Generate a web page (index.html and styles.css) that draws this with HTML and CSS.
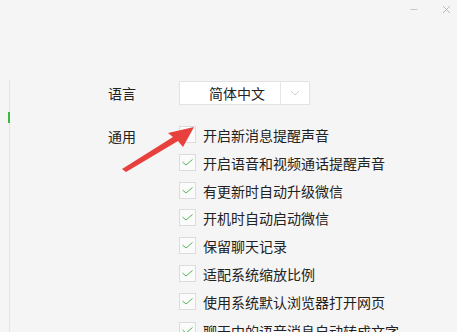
FILE: index.html
```html
<!DOCTYPE html>
<html lang="zh-CN">
<head>
<meta charset="utf-8">
<title>设置</title>
<link rel="stylesheet" href="styles.css">
</head>
<body>
<div class="page">
  <div class="titlebar">
    <span class="win-btn min"><svg width="8" height="8" viewBox="0 0 8 8"><path d="M0.5 4.5H7.5" stroke="#c8c8c8" stroke-width="1"/></svg></span>
    <span class="win-btn close"><svg width="9" height="9" viewBox="0 0 9 9"><path d="M1 1L8 8M8 1L1 8" stroke="#b8b8b8" stroke-width="1"/></svg></span>
  </div>
  <div class="main">
    <div class="rail"><div class="rail-mark"></div></div>
    <div class="content">
      <div class="row lang-row">
        <div class="label">语言</div>
        <div class="select">
          <div class="select-value">简体中文</div>
          <div class="select-arrow"><svg width="10" height="6" viewBox="0 0 10 6"><path d="M1 1L5 5L9 1" fill="none" stroke="#cfcfcf" stroke-width="1"/></svg></div>
        </div>
      </div>
      <div class="row general-row">
        <div class="label general-label">通用</div>
        <ul class="options">
          <li class="option"><span class="box"></span><span class="opt-text">开启新消息提醒声音</span></li>
          <li class="option"><span class="box checked"><svg width="11" height="7" viewBox="0 0 11 7"><path d="M0.5 3L4 6L10.5 0.5" fill="none" stroke="#4fb84f" stroke-width="1"/></svg></span><span class="opt-text">开启语音和视频通话提醒声音</span></li>
          <li class="option"><span class="box checked"><svg width="11" height="7" viewBox="0 0 11 7"><path d="M0.5 3L4 6L10.5 0.5" fill="none" stroke="#4fb84f" stroke-width="1"/></svg></span><span class="opt-text">有更新时自动升级微信</span></li>
          <li class="option"><span class="box checked"><svg width="11" height="7" viewBox="0 0 11 7"><path d="M0.5 3L4 6L10.5 0.5" fill="none" stroke="#4fb84f" stroke-width="1"/></svg></span><span class="opt-text">开机时自动启动微信</span></li>
          <li class="option"><span class="box checked"><svg width="11" height="7" viewBox="0 0 11 7"><path d="M0.5 3L4 6L10.5 0.5" fill="none" stroke="#4fb84f" stroke-width="1"/></svg></span><span class="opt-text">保留聊天记录</span></li>
          <li class="option"><span class="box checked"><svg width="11" height="7" viewBox="0 0 11 7"><path d="M0.5 3L4 6L10.5 0.5" fill="none" stroke="#4fb84f" stroke-width="1"/></svg></span><span class="opt-text">适配系统缩放比例</span></li>
          <li class="option"><span class="box checked"><svg width="11" height="7" viewBox="0 0 11 7"><path d="M0.5 3L4 6L10.5 0.5" fill="none" stroke="#4fb84f" stroke-width="1"/></svg></span><span class="opt-text">使用系统默认浏览器打开网页</span></li>
          <li class="option option-last"><span class="box checked"><svg width="11" height="7" viewBox="0 0 11 7"><path d="M0.5 3L4 6L10.5 0.5" fill="none" stroke="#4fb84f" stroke-width="1"/></svg></span><span class="opt-text">聊天中的语音消息自动转成文字</span></li>
        </ul>
      </div>
    </div>
  </div>
  <svg class="arrow" width="457" height="332" viewBox="0 0 457 332">
    <polygon points="122,169 173,137 168,133 194,127 183,147 178,141 126,172" fill="#e8403c"/>
  </svg>
</div>
</body>
</html>
```
FILE: styles.css
```css
html, body {
  margin: 0;
  padding: 0;
  background: #f5f5f5;
}
body {
  font-family: "Noto Sans CJK SC", "Microsoft YaHei", sans-serif;
  font-size: 14px;
  color: #222;
  overflow: hidden;
}
.page {
  position: relative;
  width: 457px;
  height: 332px;
  overflow: hidden;
  display: flex;
  flex-direction: column;
}
.titlebar {
  height: 80px;
  flex: none;
  display: flex;
  justify-content: flex-end;
  align-items: flex-start;
  padding-top: 4px;
  box-sizing: border-box;
  padding-right: 6px;
  gap: 22px;
}
.win-btn {
  display: flex;
  width: 10px;
  height: 10px;
  align-items: center;
  justify-content: center;
}
.main {
  flex: 1;
  display: flex;
}
.rail {
  margin-left: 9px;
  width: 1px;
  background: #e4e4e4;
  flex: none;
}
.rail-mark {
  margin-top: 32px;
  margin-left: -1px;
  width: 2px;
  height: 11px;
  background: #3cb83c;
}
.content {
  padding-left: 98px;
  padding-top: 1px;
  display: flex;
  flex-direction: column;
}
.row {
  display: flex;
}
.label {
  width: 71px;
  flex: none;
  line-height: 24px;
}
.lang-row {
  align-items: center;
  height: 24px;
}
.select {
  display: flex;
  width: 131px;
  height: 24px;
  box-sizing: border-box;
  border: 1px solid #e3e3e3;
  background: #fff;
}
.select-value {
  width: 101px;
  text-align: center;
  line-height: 22px;
  padding-left: 14px;
  box-sizing: border-box;
  border-right: 1px solid #e6e6e6;
  color: #222;
}
.select-arrow {
  flex: 1;
  display: flex;
  align-items: center;
  justify-content: center;
}
.general-row {
  margin-top: 21px;
}
.general-label {
  line-height: 17px;
  margin-top: 2px;
}
.options {
  list-style: none;
  margin: 0;
  padding: 0;
  display: flex;
  flex-direction: column;
  gap: 10.8px;
}
.option {
  display: flex;
  align-items: center;
  height: 17px;
  gap: 7px;
  white-space: nowrap;
}
.option-last {
  margin-top: 1px;
}
.box {
  width: 17px;
  height: 17px;
  box-sizing: border-box;
  border: 1px solid #dcdcdc;
  background: #fbfbfb;
  display: flex;
  align-items: center;
  justify-content: center;
  flex: none;
}
.opt-text {
  line-height: 17px;
  margin-top: 2px;
  color: #222;
}
.arrow {
  position: absolute;
  left: 0;
  top: 0;
  pointer-events: none;
}
```
